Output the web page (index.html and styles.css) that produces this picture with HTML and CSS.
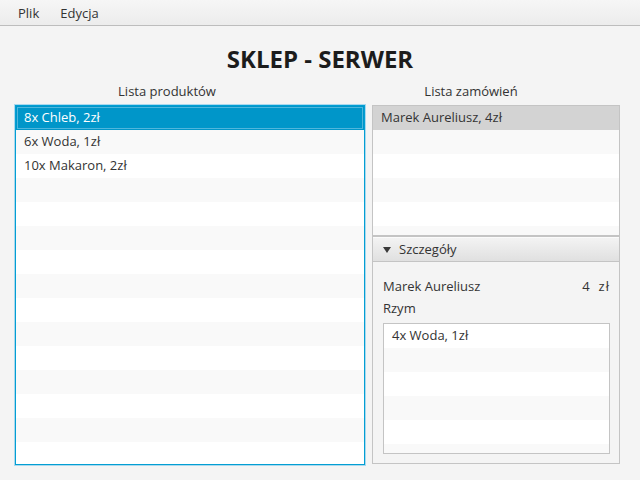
FILE: index.html
```html
<!DOCTYPE html>
<html lang="pl">
<head>
<meta charset="utf-8">
<title>Sklep - Serwer</title>
<link rel="stylesheet" href="styles.css">
</head>
<body>
<div class="menubar">
  <span class="menu">Plik</span>
  <span class="menu">Edycja</span>
</div>
<h1 class="title">SKLEP - SERWER</h1>
<div class="main">
  <div class="col col-left">
    <div class="label label-left">Lista produktów</div>
    <div class="list list-focused list-tall">
      <div class="row row-selected">8x Chleb, 2zł</div>
      <div class="row row-odd">6x Woda, 1zł</div>
      <div class="row">10x Makaron, 2zł</div>
      <div class="row row-odd"></div>
      <div class="row"></div>
      <div class="row row-odd"></div>
      <div class="row"></div>
      <div class="row row-odd"></div>
      <div class="row"></div>
      <div class="row row-odd"></div>
      <div class="row"></div>
      <div class="row row-odd"></div>
      <div class="row"></div>
      <div class="row row-odd"></div>
      <div class="row"></div>
    </div>
  </div>
  <div class="col col-right">
    <div class="label label-right">Lista zamówień</div>
    <div class="list list-orders">
      <div class="row row-selected-gray">Marek Aureliusz, 4zł</div>
      <div class="row row-odd"></div>
      <div class="row"></div>
      <div class="row row-odd"></div>
      <div class="row"></div>
      <div class="row row-odd"></div>
    </div>
    <div class="titled">
      <div class="titled-header">
        <span class="arrow"></span>
        <span>Szczegóły</span>
      </div>
      <div class="titled-content">
        <div class="detail-row">
          <span>Marek Aureliusz</span>
          <span class="price"><span>4</span><span class="currency">zł</span></span>
        </div>
        <div class="detail-row detail-city">Rzym</div>
        <div class="list list-inner">
          <div class="row">4x Woda, 1zł</div>
          <div class="row row-odd"></div>
          <div class="row"></div>
          <div class="row row-odd"></div>
          <div class="row"></div>
          <div class="row row-odd"></div>
        </div>
      </div>
    </div>
  </div>
</div>
</body>
</html>
```

FILE: styles.css
```css
html, body {
  margin: 0;
  padding: 0;
}
body {
  background: #f4f4f4;
  font-family: "Open Sans", "Noto Sans", sans-serif;
  font-size: 13px;
  color: #333333;
  width: 640px;
  height: 480px;
  overflow: hidden;
}
.menubar {
  height: 25px;
  border-bottom: 1px solid #bdbdbd;
  background: linear-gradient(#f6f6f6, #ececec);
  display: flex;
  padding-left: 7px;
}
.menu {
  padding: 2px 11px 0 11px;
  line-height: 23px;
  color: #333333;
}
.menu + .menu {
  margin-left: -1px;
}
.title {
  margin: 17px 0 0 0;
  font-size: 24px;
  line-height: 32px;
  font-weight: bold;
  text-align: center;
  color: #1c1c1c;
}
.main {
  display: flex;
  gap: 6px;
  padding: 7px 20px 0 14px;
}
.col {
  display: flex;
  flex-direction: column;
}
.col-left {
  width: 352px;
}
.col-right {
  width: 248px;
}
.label {
  line-height: 18px;
  height: 18px;
  text-align: center;
  margin-bottom: 5px;
  white-space: nowrap;
}
.label-left {
  padding-right: 46px;
}
.label-right {
  padding-right: 50px;
}
.list {
  background: #ffffff;
  border: 1px solid #c4c4c4;
  overflow: hidden;
}
.list-focused {
  margin: 0 1px;
  border-color: #039ed3;
  box-shadow: 0 0 0 1px #a9d9ee;
}
.list-tall {
  height: 358px;
}
.list-orders {
  height: 129px;
}
.row {
  height: 24px;
  line-height: 23px;
  padding: 0 8px;
  white-space: nowrap;
  background: #ffffff;
}
.row-odd {
  background: #f9f9f9;
}
.row-selected {
  background: #0096c9;
  color: #ffffff;
  box-shadow: inset 0 0 0 1px #0096c9, inset 0 0 0 2px #4fb6dc;
}
.row-selected-gray {
  background: #d3d3d3;
}
.titled {
  display: flex;
  flex-direction: column;
}
.titled-header {
  height: 24px;
  line-height: 24px;
  border: 1px solid #c4c4c4;
  background: linear-gradient(#f4f4f4, #e0e0e0);
  box-shadow: inset 0 1px 0 #fbfbfb;
  display: flex;
  align-items: center;
  padding-left: 10px;
  gap: 8px;
}
.arrow {
  width: 0;
  height: 0;
  border-left: 4px solid transparent;
  border-right: 4px solid transparent;
  border-top: 6px solid #3a3a3a;
  margin-top: 1px;
}
.titled-content {
  height: 202px;
  box-sizing: border-box;
  border: 1px solid #c4c4c4;
  border-top: none;
  background: #f4f4f4;
  padding: 15px 9px 0 10px;
  display: flex;
  flex-direction: column;
}
.detail-row {
  line-height: 18px;
  height: 18px;
  display: flex;
  justify-content: space-between;
  white-space: nowrap;
}
.detail-city {
  margin-top: 4px;
}
.price {
  display: flex;
  gap: 9px;
}
.currency {
  letter-spacing: 1px;
}
.list-inner {
  margin-top: 6px;
  height: 129px;
}
```
